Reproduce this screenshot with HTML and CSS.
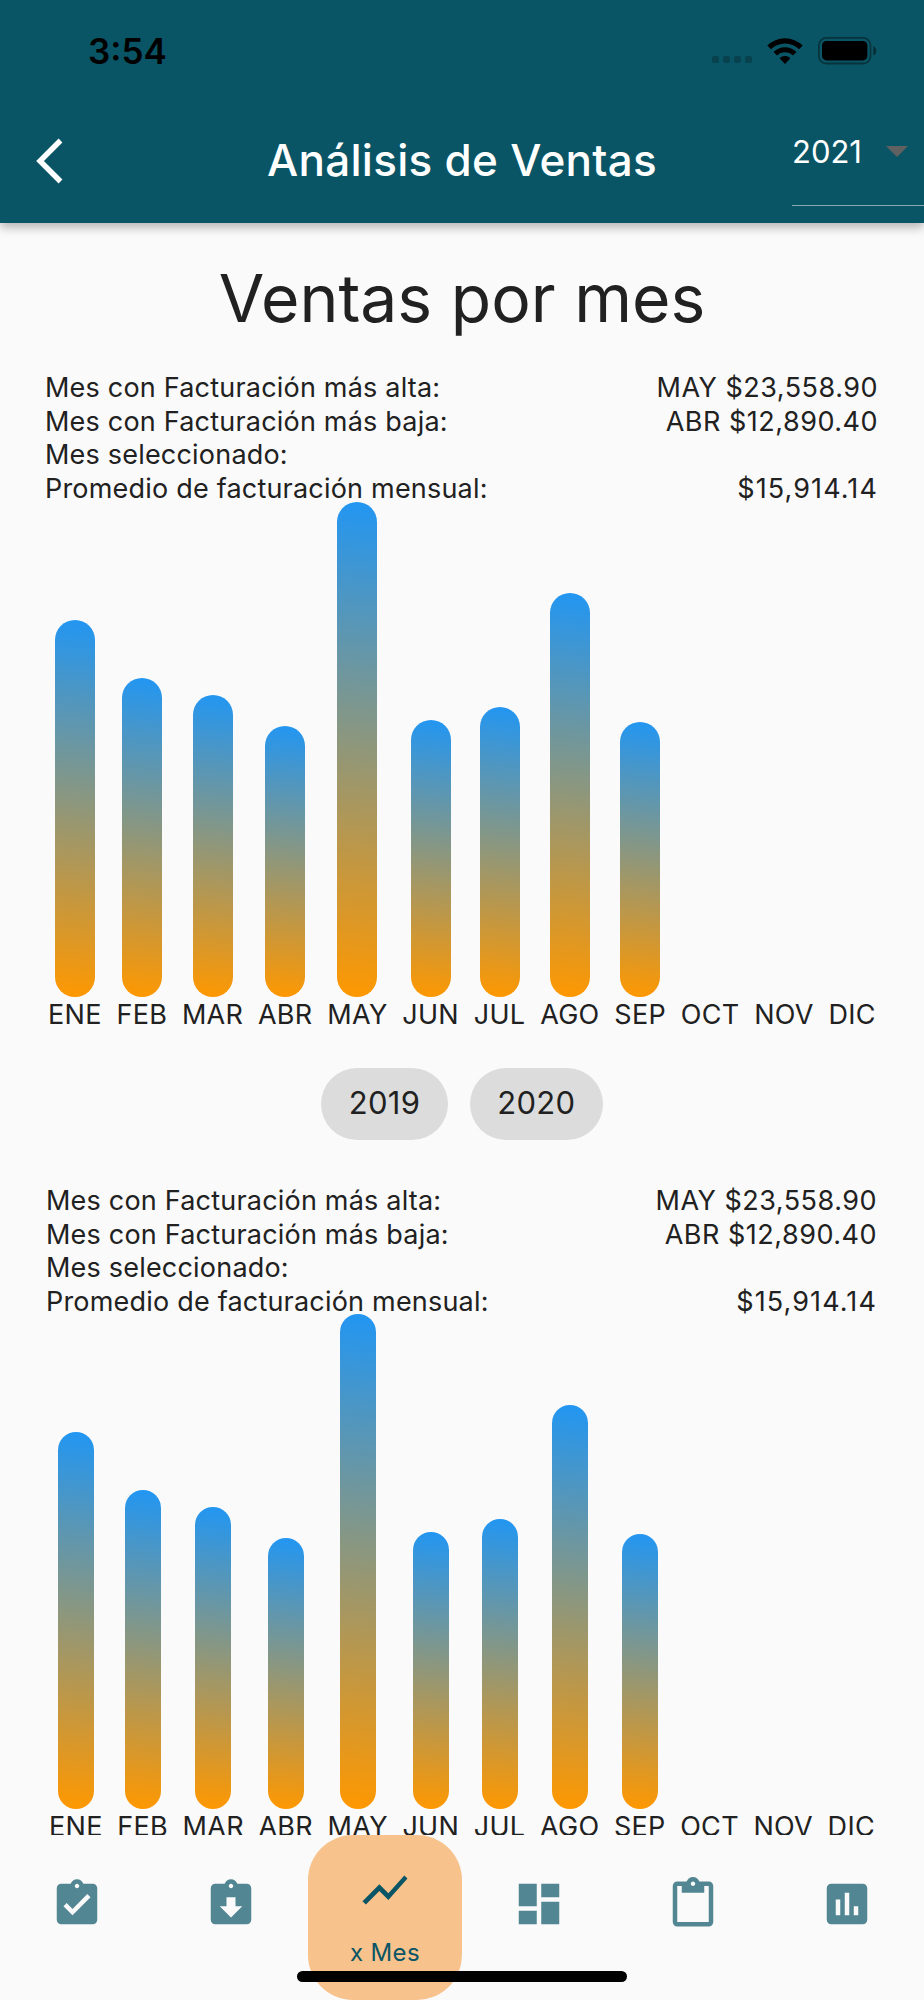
FILE: index.html
```html
<!DOCTYPE html>
<html lang="es">

<head>
    <meta charset="UTF-8">
    <meta name="viewport" content="width=device-width, initial-scale=1.0">
    <title>Análisis de Ventas</title>
    <link rel="stylesheet" href="styles.css">
</head>

<body>
    <header class="app-bar">
        <div class="status-bar">
            <span class="clock">3:54</span>
            <div class="status-icons">
                <div class="signal"><i></i><i></i><i></i><i></i></div>
                <svg class="wifi" viewBox="0 0 36 27" width="36" height="27">
                    <path d="M0.3 7.6 A25 25 0 0 1 35.7 7.6 L32 11.3 A19.8 19.8 0 0 0 4 11.3 Z" />
                    <path d="M6.5 13.9 A16.4 16.4 0 0 1 29.5 13.9 L25.8 17.6 A11 11 0 0 0 10.2 17.6 Z" />
                    <path d="M12.6 20.3 A7.6 7.6 0 0 1 23.4 20.3 L18 26 Z" />
                </svg>
                <svg class="battery" viewBox="0 0 59 28" width="59" height="28">
                    <rect x="0.9" y="0.9" width="51.6" height="25.6" rx="7.5" fill="none" stroke="#000" stroke-opacity=".4" stroke-width="1.8" />
                    <rect x="4" y="4" width="45.4" height="19.4" rx="4.5" />
                    <path d="M55.3 9 Q58.4 10.5 58.4 13.7 Q58.4 17 55.3 18.4 Z" fill-opacity=".45" />
                </svg>
            </div>
        </div>
        <div class="toolbar">
            <svg class="back" viewBox="0 0 27 46" width="27" height="46">
                <path d="M24.5 2.5 L4 23 L24.5 43.5" fill="none" stroke="#fff" stroke-width="5.4" />
            </svg>
            <h1>Análisis de Ventas</h1>
            <div class="year-select">
                <span>2021</span>
                <svg viewBox="0 0 22 11" width="22" height="11">
                    <path d="M0 0h22L11 11z" fill="#616161" />
                </svg>
            </div>
        </div>
    </header>

    <main class="content">
        <h2>Ventas por mes</h2>

        <section class="report">
            <div class="summary">
                <p><span>Mes con Facturación más alta:</span><span class="amount">MAY $23,558.90</span></p>
                <p><span>Mes con Facturación más baja:</span><span class="amount">ABR $12,890.40</span></p>
                <p><span>Mes seleccionado:</span></p>
                <p><span>Promedio de facturación mensual:</span><span class="amount average">$15,914.14</span></p>
            </div>
            <div class="chart">
                <div class="month"><div class="bar" style="height: 377px"></div><span>ENE</span></div>
                <div class="month"><div class="bar" style="height: 319px"></div><span>FEB</span></div>
                <div class="month"><div class="bar" style="height: 302px"></div><span>MAR</span></div>
                <div class="month"><div class="bar" style="height: 271px"></div><span>ABR</span></div>
                <div class="month"><div class="bar" style="height: 495px"></div><span>MAY</span></div>
                <div class="month"><div class="bar" style="height: 277px"></div><span>JUN</span></div>
                <div class="month"><div class="bar" style="height: 290px"></div><span>JUL</span></div>
                <div class="month"><div class="bar" style="height: 404px"></div><span>AGO</span></div>
                <div class="month"><div class="bar" style="height: 275px"></div><span>SEP</span></div>
                <div class="month"><span>OCT</span></div>
                <div class="month"><span>NOV</span></div>
                <div class="month"><span>DIC</span></div>
            </div>
        </section>

        <div class="chips">
            <button class="chip">2019</button>
            <button class="chip">2020</button>
        </div>

        <section class="report compare">
            <div class="summary">
                <p><span>Mes con Facturación más alta:</span><span class="amount">MAY $23,558.90</span></p>
                <p><span>Mes con Facturación más baja:</span><span class="amount">ABR $12,890.40</span></p>
                <p><span>Mes seleccionado:</span></p>
                <p><span>Promedio de facturación mensual:</span><span class="amount average">$15,914.14</span></p>
            </div>
            <div class="chart">
                <div class="month"><div class="bar" style="height: 377px"></div><span>ENE</span></div>
                <div class="month"><div class="bar" style="height: 319px"></div><span>FEB</span></div>
                <div class="month"><div class="bar" style="height: 302px"></div><span>MAR</span></div>
                <div class="month"><div class="bar" style="height: 271px"></div><span>ABR</span></div>
                <div class="month"><div class="bar" style="height: 495px"></div><span>MAY</span></div>
                <div class="month"><div class="bar" style="height: 277px"></div><span>JUN</span></div>
                <div class="month"><div class="bar" style="height: 290px"></div><span>JUL</span></div>
                <div class="month"><div class="bar" style="height: 404px"></div><span>AGO</span></div>
                <div class="month"><div class="bar" style="height: 275px"></div><span>SEP</span></div>
                <div class="month"><span>OCT</span></div>
                <div class="month"><span>NOV</span></div>
                <div class="month"><span>DIC</span></div>
            </div>
        </section>
    </main>

    <nav class="bottom-nav">
        <a class="nav-item">
            <svg viewBox="0 0 24 24"><path d="M19 3h-4.18C14.4 1.84 13.3 1 12 1c-1.3 0-2.4.84-2.82 2H5c-1.1 0-2 .9-2 2v14c0 1.1.9 2 2 2h14c1.1 0 2-.9 2-2V5c0-1.1-.9-2-2-2zm-7 0c.55 0 1 .45 1 1s-.45 1-1 1-1-.45-1-1 .45-1 1-1zm-2 14l-4-4 1.41-1.41L10 14.17l6.59-6.59L18 9l-8 8z" /></svg>
        </a>
        <a class="nav-item">
            <svg viewBox="0 0 24 24"><path d="M19 3h-4.18C14.4 1.84 13.3 1 12 1c-1.3 0-2.4.84-2.82 2H5c-1.1 0-2 .9-2 2v14c0 1.1.9 2 2 2h14c1.1 0 2-.9 2-2V5c0-1.1-.9-2-2-2zm-7 0c.55 0 1 .45 1 1s-.45 1-1 1-1-.45-1-1 .45-1 1-1zm0 15l-5-5h3V9h4v4h3l-5 5z" /></svg>
        </a>
        <a class="nav-item active">
            <svg viewBox="0 0 24 24"><path d="M3.5 18.49l6-6.01 4 4L22 6.92l-1.41-1.41-7.09 7.97-4-4L2 16.99z" /></svg>
            <span>x Mes</span>
        </a>
        <a class="nav-item">
            <svg viewBox="0 0 24 24"><path d="M3 13h8V3H3v10zm0 8h8v-6H3v6zm10 0h8V11h-8v10zm0-18v6h8V3h-8z" /></svg>
        </a>
        <a class="nav-item">
            <svg viewBox="0 0 24 24"><path d="M19 2h-4.18C14.4.84 13.3 0 12 0c-1.3 0-2.4.84-2.82 2H5c-1.1 0-2 .9-2 2v16c0 1.1.9 2 2 2h14c1.1 0 2-.9 2-2V4c0-1.1-.9-2-2-2zm-7 0c.55 0 1 .45 1 1s-.45 1-1 1-1-.45-1-1 .45-1 1-1zm7 18H5V4h2v3h10V4h2v16z" /></svg>
        </a>
        <a class="nav-item">
            <svg viewBox="0 0 24 24"><path d="M19 3H5c-1.1 0-2 .9-2 2v14c0 1.1.9 2 2 2h14c1.1 0 2-.9 2-2V5c0-1.1-.9-2-2-2zM9 17H7v-7h2v7zm4 0h-2V7h2v10zm4 0h-2v-4h2v4z" /></svg>
        </a>
        <div class="home-indicator"></div>
    </nav>
</body>

</html>
```

FILE: styles.css
```css
* {
    box-sizing: border-box;
}

body {
    font-family: Inter, "Liberation Sans", sans-serif;
    margin: 0;
    height: 2000px;
    display: flex;
    flex-direction: column;
    background-color: #fafafa;
    color: #212121;
    overflow: hidden;
}

h1,
h2,
p {
    margin: 0;
    font-weight: 400;
}

/* Header */
.app-bar {
    flex: none;
    height: 223px;
    background-color: #0a5565;
    box-shadow: 0 4px 10px rgba(0, 0, 0, 0.3);
    z-index: 1;
}

.status-bar {
    height: 98px;
    padding: 4px 47px 0 88px;
    display: flex;
    align-items: center;
    justify-content: space-between;
    color: #000;
}

.clock {
    font-size: 35px;
    font-weight: 600;
}

.status-icons {
    display: flex;
    align-items: center;
}

.signal {
    display: flex;
    gap: 4px;
    margin: 17px 15px 0 0;
}

.signal i {
    width: 7px;
    height: 7px;
    border-radius: 2px;
    background-color: rgba(0, 0, 0, 0.22);
}

.wifi {
    margin-right: 15px;
}

.toolbar {
    height: 125px;
    display: grid;
    grid-template-columns: 132px 1fr 132px;
    align-items: center;
}

.back {
    margin-left: 36px;
}

.toolbar h1 {
    padding-bottom: 1px;
    font-size: 44px;
    font-weight: 500;
    letter-spacing: 0.3px;
    text-align: center;
    color: #fff;
}

.year-select {
    height: 108px;
    align-self: start;
    display: flex;
    align-items: center;
    gap: 24px;
    border-bottom: 1px solid rgba(255, 255, 255, 0.5);
    font-size: 31px;
    color: #fff;
}

/* Reports */
.content {
    flex: none;
    height: 1612px;
    overflow: hidden;
}

.content h2 {
    height: 148px;
    line-height: 150px;
    font-size: 66px;
    text-align: center;
}

.summary {
    height: 131px;
    padding: 0 46px 0 45px;
    font-size: 27px;
    line-height: 33.5px;
    letter-spacing: 0.2px;
}

.summary p {
    display: flex;
    justify-content: space-between;
}

.amount {
    letter-spacing: 0.5px;
}

.amount.average {
    letter-spacing: 1.1px;
}

.chart {
    height: 530px;
    padding: 0 48px 0 48px;
    display: flex;
    align-items: flex-end;
    justify-content: space-between;
    font-size: 27px;
    line-height: 35px;
    letter-spacing: 0.3px;
}

.month {
    display: flex;
    flex-direction: column;
    align-items: center;
}

.bar {
    width: 40px;
    border-radius: 20px;
    background: linear-gradient(186deg, #2196f3, #ff9800);
}

.compare .summary {
    padding: 1px 47px 0 46px;
}

.compare .chart {
    padding: 0 49px;
}

.compare .bar {
    width: 36px;
}

.chips {
    height: 150px;
    padding-top: 36px;
    display: flex;
    align-items: flex-start;
    justify-content: center;
    gap: 22px;
}

.chip {
    height: 72px;
    padding: 0 27.5px 3px;
    border: none;
    border-radius: 36px;
    background-color: #dcdcdc;
    font-family: inherit;
    font-size: 31px;
    letter-spacing: 0.3px;
    color: #212121;
}

.compare {
    padding-top: 1px;
}

/* Bottom navigation */
.bottom-nav {
    position: relative;
    flex: none;
    height: 165px;
    display: grid;
    grid-template-columns: repeat(6, 1fr);
}

.nav-item {
    display: flex;
    flex-direction: column;
    align-items: center;
    padding-top: 42px;
    color: #528692;
}

.nav-item svg {
    width: 54px;
    height: 54px;
    fill: currentColor;
}

.nav-item.active {
    padding-top: 28px;
    border-radius: 45px;
    background-color: #f8c28c;
    color: #0a5565;
    font-size: 24px;
    letter-spacing: 0.4px;
}

.nav-item.active span {
    margin-top: 21px;
}

.home-indicator {
    position: absolute;
    left: 297px;
    bottom: 18px;
    width: 330px;
    height: 11px;
    border-radius: 6px;
    background-color: #000;
}
```
